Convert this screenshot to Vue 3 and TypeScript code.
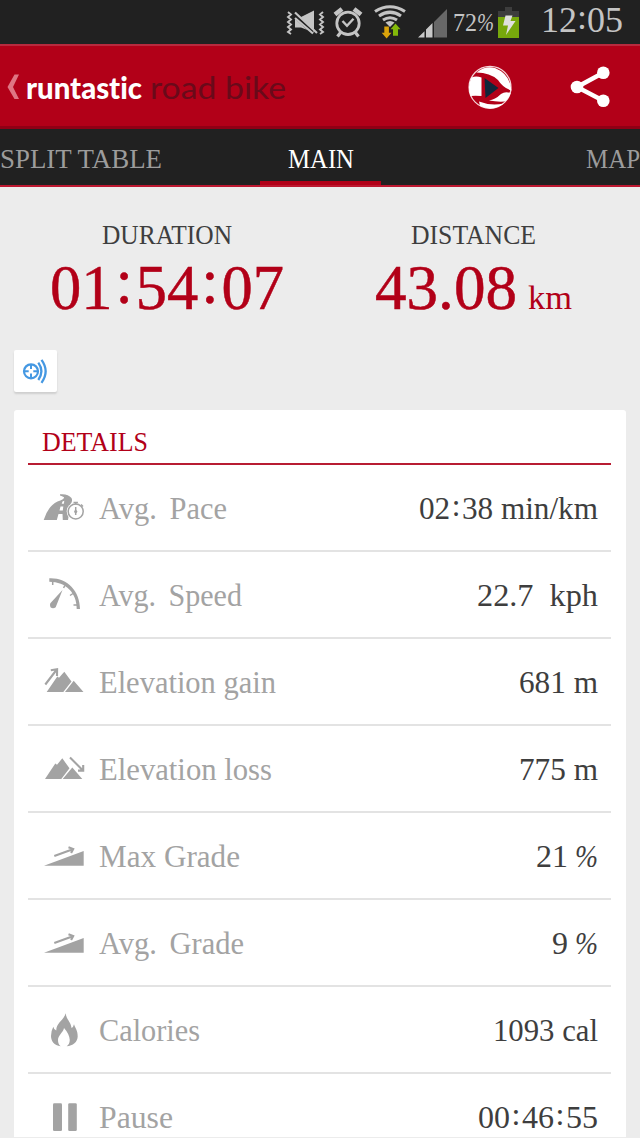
<script setup lang="ts">
import type { Directive } from 'vue'

interface Metric {
  icon: string
  label: string
  labelWidth: number
  value: string
  valueWidth: number
  unit?: string
}

const metrics: Metric[] = [
  { icon: 'pace', label: 'Avg. Pace', labelWidth: 128, value: '02:38 min/km', valueWidth: 179 },
  { icon: 'speed', label: 'Avg. Speed', labelWidth: 143, value: '22.7\u00a0 kph', valueWidth: 121 },
  { icon: 'gain', label: 'Elevation gain', labelWidth: 177, value: '681 m', valueWidth: 79 },
  { icon: 'loss', label: 'Elevation loss', labelWidth: 173, value: '775 m', valueWidth: 79 },
  { icon: 'grade', label: 'Max Grade', labelWidth: 141, value: '21', valueWidth: 32, unit: '%' },
  { icon: 'grade', label: 'Avg. Grade', labelWidth: 145, value: '9', valueWidth: 16, unit: '%' },
  { icon: 'calories', label: 'Calories', labelWidth: 101, value: '1093 cal', valueWidth: 105 },
  { icon: 'pause', label: 'Pause', labelWidth: 74, value: '00:46:55', valueWidth: 120 },
]

const pieces = (text: string): string[] => text.split(/(:)/).filter(Boolean)

// Scales a text run horizontally so that it takes the given width.
const vFit: Directive<HTMLElement, number> = {
  mounted(el, { value }) {
    const natural = el.getBoundingClientRect().width
    el.style.transform = `scaleX(${value / natural})`
    el.style.marginRight = `${value - natural}px`
  },
}
</script>

<template>
  <div class="screen">
    <div class="status">
      <svg width="44" height="44" viewBox="284 0 44 44" fill="none" stroke="#c4c4c4">
        <path d="M295 17h6L314 10.500v22L301 27.500h-6z" fill="#c4c4c4" stroke="none" />
        <path d="M295 15.500L313 32" stroke="#212121" stroke-width="5" />
        <path d="M295 12.500L317 33M295 18L313 33.500" stroke-width="2.200" />
        <path d="M288 12l3 2.500-3 2.500 3 2.500-3 2.500 3 2.500-3 2.500 3 2.500-3 2.500 3 2M323 12l-3 2.500 3 2.500-3 2.500 3 2.500-3 2.500 3 2.500-3 2.500 3 2.500-3 2" stroke-width="1.900" />
      </svg>
      <svg width="42" height="44" viewBox="328 0 42 44" fill="none" stroke="#c4c4c4">
        <circle cx="348" cy="23.300" r="11.200" stroke-width="2.800" />
        <path d="M342.500 21l4.500 4.800 6.500-7" stroke-width="2.400" />
        <path d="M335 14.500l7-5.500M361 14.500l-7-5.500" stroke-width="4.600" />
        <path d="M341 32l-3.500 4.500M355 32l3.500 4.500" stroke-width="3.200" />
      </svg>
      <svg width="44" height="44" viewBox="370 0 44 44" fill="none" stroke="#c4c4c4">
        <path d="M375 11.500Q390 2 405 11.500M379 16Q390 8.500 401 16M383 20Q390 15.500 397 20" stroke-width="3.200" />
        <path d="M385.500 22.500q4.500-3 9 0L390 27z" fill="#c4c4c4" stroke="none" />
        <path d="M384.300 26.500h4.600v6.200h2.600L386.600 38.500 381.700 32.700h2.600z" fill="#dba40b" stroke="none" />
        <path d="M393 35.700h5v-6.500h2.500L395.500 23.500 390.500 29.200h2.500z" fill="#83b80a" stroke="none" />
      </svg>
      <svg width="39" height="44" viewBox="414 0 39 44">
        <path d="M434 37.500V22L447 9v28.500z" fill="#686868" />
        <path d="M418 37.500l6.500-6.300v6.300zM426 37.500v-8L432.500 23v14.500z" fill="#c8c8c8" />
      </svg>
      <div class="percent"><span v-fit="24" class="fit">72</span><span v-fit="17" class="fit slant">%</span></div>
      <svg class="battery" width="24" height="44" viewBox="497 0 24 44">
        <path d="M505 7h7v4h7v7h-21v-7h7z" fill="#3d3d3d" />
        <path d="M498 17h21v21h-21z" fill="#77a80c" />
        <path d="M505.500 15.500h7l-2 5.500h5l-9.500 14 2-9.500h-5z" fill="#e0e0e0" />
      </svg>
      <span v-fit="82" class="fit clock"><span v-for="(p, i) in pieces('12:05')" :key="i" :class="{ sep: p === ':' }">{{ p }}</span></span>
    </div>

    <header class="appbar">
      <svg class="back" width="13" height="26" viewBox="0 0 13 26"><path d="M7.500 0.500H12L6 13l6 12H7.500L0.500 13z" fill="#df7583" /></svg>
      <h1 class="brand"><span v-fit="116" class="fit run">runtastic</span><span v-fit="136" class="fit road">road bike</span></h1>
      <svg class="globe" width="46" height="46" viewBox="467 64 46 46">
        <circle cx="490" cy="87.300" r="21" fill="none" stroke="#f4d5d9" stroke-width="1.200" />
        <path d="M476.500 72.500Q485 65.500 495 68Q510 74 511.500 90.500Q503 88 498 80Q490 72.500 476.500 72.500z" fill="#fff" />
        <path d="M471.500 77.500Q476 75.500 481.500 77.500V96Q475 95.500 470.500 96Q467 87 471.500 77.500z" fill="#fff" />
        <path d="M489 100.500Q495 99.800 501 94Q505 91 510.700 93Q508 100.500 504.500 101.500Q497 102 489 100.500z" fill="#fff" />
        <path d="M479 101.500Q490 106 504 103.500Q492 112 480 106z" fill="#fff" />
        <path d="M484.500 78L498.500 88 485.500 98z" fill="#10263a" />
      </svg>
      <svg class="share" width="42" height="44" viewBox="570 65 42 44">
        <path d="M603.300 72.700L577 87l26.300 13.700" fill="none" stroke="#fff" stroke-width="4.500" />
        <g fill="#fff"><circle cx="577" cy="87" r="6.300" /><circle cx="603.300" cy="72.700" r="6.300" /><circle cx="603.300" cy="100.700" r="6.300" /></g>
      </svg>
    </header>

    <nav class="tabs">
      <div class="tab first"><span v-fit="162" class="fit">SPLIT TABLE</span></div>
      <div class="tab active"><span v-fit="66" class="fit">MAIN</span></div>
      <div class="tab last"><span v-fit="54" class="fit">MAP</span></div>
    </nav>

    <section class="totals">
      <div class="total">
        <div class="caption"><span v-fit="130" class="fit">DURATION</span></div>
        <div class="figure"><span v-fit="234" class="fit"><span v-for="(p, i) in pieces('01:54:07')" :key="i" :class="{ sep: p === ':' }">{{ p }}</span></span></div>
      </div>
      <div class="total">
        <div class="caption"><span v-fit="125" class="fit">DISTANCE</span></div>
        <div class="figure"><span v-fit="142" class="fit">43.08</span><span v-fit="44" class="fit unit">km</span></div>
      </div>
    </section>

    <div class="badge">
      <svg width="28" height="28" viewBox="21 357 28 28" fill="none" stroke="#4598e2">
        <circle cx="31" cy="371.300" r="7" stroke-width="2.200" />
        <path d="M31 364v5M31 373.600v5M23.700 371.300h5M33.300 371.300h5" stroke-width="2" />
        <path d="M38.300 362.700Q44.500 371.300 38.300 380M41.500 359.800Q49.800 371.300 41.500 382.800" stroke-width="2.300" />
      </svg>
    </div>

    <section class="card">
      <h2><span v-fit="106" class="fit">DETAILS</span></h2>
      <div v-for="m in metrics" :key="m.label" class="row">
        <svg class="icon" width="44" height="40" viewBox="0 0 44 40" fill="#a3a3a3">
          <template v-if="m.icon === 'pace'">
            <path d="M1.700 32Q6 18 15.500 13.500Q22.500 11.500 22 9.300Q20 8 18 7.500V6.300Q26 5.500 29.500 10Q31 13 28.500 16L26 32z" />
            <path d="M20.500 13.500l1.800-.8-.4 3h-2.200zM18.500 18.500h2.800l-.5 4h-3.300zM16.500 26h4l.3 6h-6z" fill="#fff" />
            <circle cx="33.700" cy="23.500" r="9" fill="#fff" />
            <circle cx="33.700" cy="23.500" r="7.500" fill="#fff" stroke="#a3a3a3" stroke-width="1.500" />
            <path d="M31.500 14.500h4.400M33.700 14.500v2M39 16.500l2 2M33.700 19v8" fill="none" stroke="#a3a3a3" stroke-width="1.500" />
            <circle cx="33.700" cy="23.500" r="1.600" />
          </template>
          <template v-else-if="m.icon === 'speed'">
            <path d="M10.700 6v4M22.800 10.500l-1.200 2.500M31 18.500l-3 2M36 30h-4.500" fill="none" stroke="#a3a3a3" stroke-width="1.500" />
            <path d="M7.300 3.300C25 2.500 38 16 38 34h-3.300C35 18 24 6.700 7.300 6.700z" />
            <path d="M20.500 15L13.700 32.200Q11 34.500 8.500 32.200Q7.300 29 9 27.500z" />
          </template>
          <template v-else-if="m.icon === 'gain'">
            <path d="M4.700 30L15.300 14.500l1.700 1.300 5.300-6.100 7.200 9.800L21.300 30zM23 30l8.700-11.300L41.500 30z" />
            <path d="M3.300 22.500L14.800 7.500M8.800 8.300l6.300-1-.1 6.700" fill="none" stroke="#a3a3a3" stroke-width="2.100" />
          </template>
          <template v-else-if="m.icon === 'loss'">
            <path d="M3 30L13.300 14.500l1.700 1.300 5.300-6.500 7.200 10L19.300 30zM20.700 30l9.600-11.500L40.300 30z" />
            <path d="M28 8.500L41 21.500M36 21.600h5.200v-5.500" fill="none" stroke="#a3a3a3" stroke-width="2.100" />
          </template>
          <template v-else-if="m.icon === 'grade'">
            <path d="M2 29.800L41.700 15v14.800z" />
            <path d="M12.300 20L30.800 13.200M26.500 11.300l4.700 1.800-2.100 4" fill="none" stroke="#a3a3a3" stroke-width="2.100" />
          </template>
          <template v-else-if="m.icon === 'calories'">
            <path d="M23.700 3.300C24 9 29 12 29.500 18Q31.500 17 32 14.300C33 18 35.700 20 35.700 26.500C35.500 32 31 36 24.700 36.200Q28 34 27.700 29.500Q27 23.500 22 18C21.500 22 16 25.500 16 30Q16 34.500 18.700 36.200C12 35.500 9 31 9 26Q9 21 11.300 16.700Q12 20 14.300 20.500C14 13 22 10 23.700 3.300z" />
          </template>
          <template v-else>
            <rect x="11" y="6.300" width="9" height="27.700" rx="1.300" /><rect x="26.200" y="6.300" width="8.600" height="27.700" rx="1.300" />
          </template>
        </svg>
        <div class="label"><span v-fit="m.labelWidth" class="fit" :class="{ abbr: m.label.includes('.') }">{{ m.label }}</span></div>
        <div class="value"><span v-fit="m.valueWidth" class="fit"><span v-for="(p, i) in pieces(m.value)" :key="i" :class="{ sep: p === ':' }">{{ p }}</span></span><span v-if="m.unit" v-fit="23" class="fit slant">{{ m.unit }}</span></div>
      </div>
    </section>
  </div>
</template>

<style scoped>
.screen {
  width: 640px;
  height: 1138px;
  overflow: hidden;
  background: #ececec;
  font-family: "Liberation Serif", serif;
  color: #3e3e3e;
}
svg { display: block; flex: none; }
.fit {
  display: inline-block;
  white-space: pre;
  transform-origin: 0 50%;
}
.sep { display: inline-block; transform: translateY(-0.09em); }
.status {
  display: flex;
  height: 44px;
  padding-left: 284px;
  background: #212121;
  color: #c4c4c4;
}
.percent {
  width: 44px;
  font-size: 25px;
  line-height: 46px;
  white-space: nowrap;
}
.clock { margin-left: 20px; font-size: 36px; line-height: 41px; }
.slant { font-style: italic; }
.appbar {
  box-sizing: border-box;
  display: flex;
  height: 85px;
  border-top: 2px solid #b82a3e;
  border-bottom: 3px solid #8f0015;
  background: #b20018;
}
.back { margin: 28px 6px 0 7px; }
.brand {
  display: flex;
  width: 441px;
  margin: 0;
  font-family: Lato, sans-serif;
  font-size: 31px;
  font-variant-ligatures: none;
  line-height: 82px;
}
.run { color: #fff; font-weight: 900; }
.road { margin-left: 8px; color: #690a1a; font-weight: 400; }
.globe { margin-top: 18px; }
.share { margin: 19px 0 0 57px; }
.tabs {
  box-sizing: border-box;
  display: flex;
  height: 58px;
  border-bottom: 2px solid #bd1830;
  background: #212121;
  color: #9c9c9c;
  font-size: 27px;
  line-height: 60px;
}
.tab { box-sizing: border-box; height: 56px; white-space: nowrap; }
.first { width: 260px; }
.active {
  width: 121px;
  padding-left: 28px;
  border-bottom: 4px solid #b20018;
  color: #fff;
}
.last { padding-left: 205px; }
.totals { display: flex; height: 163px; padding-left: 14px; }
.total { width: 306px; text-align: center; }
.caption { height: 32px; padding-top: 32px; font-size: 28px; line-height: 31px; }
.figure {
  color: #b20018;
  font-size: 64px;
  line-height: 74px;
  white-space: nowrap;
  -webkit-text-stroke: 0.5px #b20018;
}
.figure .sep { padding: 0 3px; }
.figure .unit { margin-left: 11px; font-size: 33px; line-height: 40px; -webkit-text-stroke-width: 0; }
.badge {
  box-sizing: border-box;
  width: 43px;
  height: 42px;
  margin-left: 14px;
  padding: 7px;
  border-radius: 2px;
  background: #fff;
  box-shadow: 0 2px 2px #cfcfcf;
}
.card {
  height: 727px;
  margin: 18px 14px 0;
  padding: 0 15px 0 14px;
  border-radius: 3px 3px 0 0;
  background: #fff;
  overflow: hidden;
  box-sizing: border-box;
}
h2 {
  box-sizing: border-box;
  height: 55px;
  margin: 0;
  padding-left: 14px;
  border-bottom: 2px solid #b81c32;
  color: #b20018;
  font-size: 27px;
  font-weight: 400;
  line-height: 65px;
}
.row {
  box-sizing: border-box;
  display: flex;
  height: 87px;
  padding: 0 13px 0 14px;
  border-bottom: 2px solid #e3e3e3;
  font-size: 31px;
  line-height: 87px;
}
.icon { margin: 23px 13px 0 0; }
.label { flex: 1; color: #a3a3a3; font-size: 30.500px; line-height: 89px; white-space: nowrap; }
.abbr { word-spacing: 5px; }
.value { white-space: nowrap; }
.value .sep { padding: 0 1.500px; }
.value .slant { margin-left: 7px; font-size: 31px; }
</style>
